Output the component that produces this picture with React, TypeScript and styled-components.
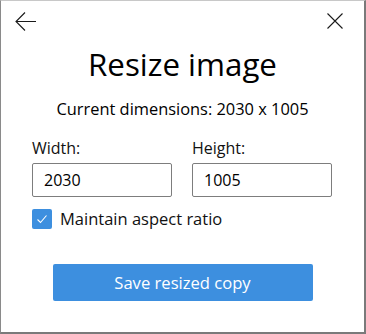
import React from "react";
import styled, { createGlobalStyle } from "styled-components";

const Global = createGlobalStyle`
  html, body { margin: 0; padding: 0; background: #ffffff; }
  body { font-family: "Open Sans", "Noto Sans", sans-serif; color: #111111; }
  * { box-sizing: border-box; }
`;

const Window = styled.div`
  width: 366px;
  height: 334px;
  background: #ffffff;
  border-top: 1px solid #c8c8c8;
  border-left: 1px solid #8a8a8a;
  border-right: 2px solid #7a7a7a;
  border-bottom: 2px solid #7a7a7a;
  display: flex;
  flex-direction: column;
`;

const TitleBar = styled.div`
  height: 40px;
  display: flex;
  justify-content: space-between;
  align-items: center;
  padding: 0 17px 0 13px;
`;

const IconButton = styled.button`
  border: 0;
  background: transparent;
  padding: 0;
  width: 24px;
  height: 24px;
  display: flex;
  align-items: center;
  justify-content: center;
  color: #1a1a1a;
`;

const Body = styled.div`
  display: flex;
  flex-direction: column;
  align-items: center;
  padding: 0 31px;
`;

const Title = styled.h1`
  margin: 3px 0 0;
  font-size: 31.3px;
  font-weight: 400;
  line-height: 40px;
  color: #000;
`;

const Subtitle = styled.div`
  margin-top: 14px;
  font-size: 16.4px;
  line-height: 22px;
  color: #000;
`;

const Fields = styled.div`
  align-self: stretch;
  display: grid;
  grid-template-columns: 140px 140px;
  column-gap: 20px;
  margin-top: 17px;
`;

const Field = styled.label`
  display: flex;
  flex-direction: column;
  gap: 4px;
  font-size: 16px;
  line-height: 22px;
`;

const Input = styled.input`
  width: 140px;
  height: 34px;
  border: 1px solid #7d7d7d;
  border-radius: 2px;
  padding: 0 10px 0 11px;
  font-family: inherit;
  font-size: 16px;
  color: #000;
  outline: none;
`;

const CheckRow = styled.label`
  align-self: stretch;
  display: flex;
  align-items: center;
  gap: 8px;
  margin-top: 11px;
  font-size: 16.5px;
  line-height: 22px;
`;

const CheckBox = styled.span`
  width: 20px;
  height: 20px;
  border-radius: 2px;
  background: #3d8fdf;
  display: flex;
  align-items: center;
  justify-content: center;
`;

const PrimaryButton = styled.button`
  margin-top: 34px;
  width: 260px;
  height: 37px;
  border: 0;
  border-radius: 2px;
  background: #3d8fdf;
  color: #ffffff;
  font-family: inherit;
  font-size: 16.6px;
`;

export default function App() {
  return (
    <>
      <Global />
      <Window>
        <TitleBar>
          <IconButton aria-label="Back">
            <svg width="24" height="24" viewBox="0 0 24 24" fill="none">
              <path d="M2 12.5 H22 M11 3.5 L2 12.5 L11 21.5" stroke="#1a1a1a" strokeWidth="1.1" />
            </svg>
          </IconButton>
          <IconButton aria-label="Close">
            <svg width="24" height="24" viewBox="0 0 24 24" fill="none">
              <path d="M4.5 4.5 L19.5 19.5 M19.5 4.5 L4.5 19.5" stroke="#1a1a1a" strokeWidth="1.1" />
            </svg>
          </IconButton>
        </TitleBar>
        <Body>
          <Title>Resize image</Title>
          <Subtitle>Current dimensions: 2030 x 1005</Subtitle>
          <Fields>
            <Field>
              Width:
              <Input defaultValue="2030" />
            </Field>
            <Field>
              Height:
              <Input defaultValue="1005" />
            </Field>
          </Fields>
          <CheckRow>
            <CheckBox>
              <svg width="14" height="14" viewBox="0 0 14 14" fill="none">
                <path d="M2.5 7.5 L5.5 10.5 L11.5 3.5" stroke="#ffffff" strokeWidth="1.1" />
              </svg>
            </CheckBox>
            Maintain aspect ratio
          </CheckRow>
          <PrimaryButton>Save resized copy</PrimaryButton>
        </Body>
      </Window>
    </>
  );
}
